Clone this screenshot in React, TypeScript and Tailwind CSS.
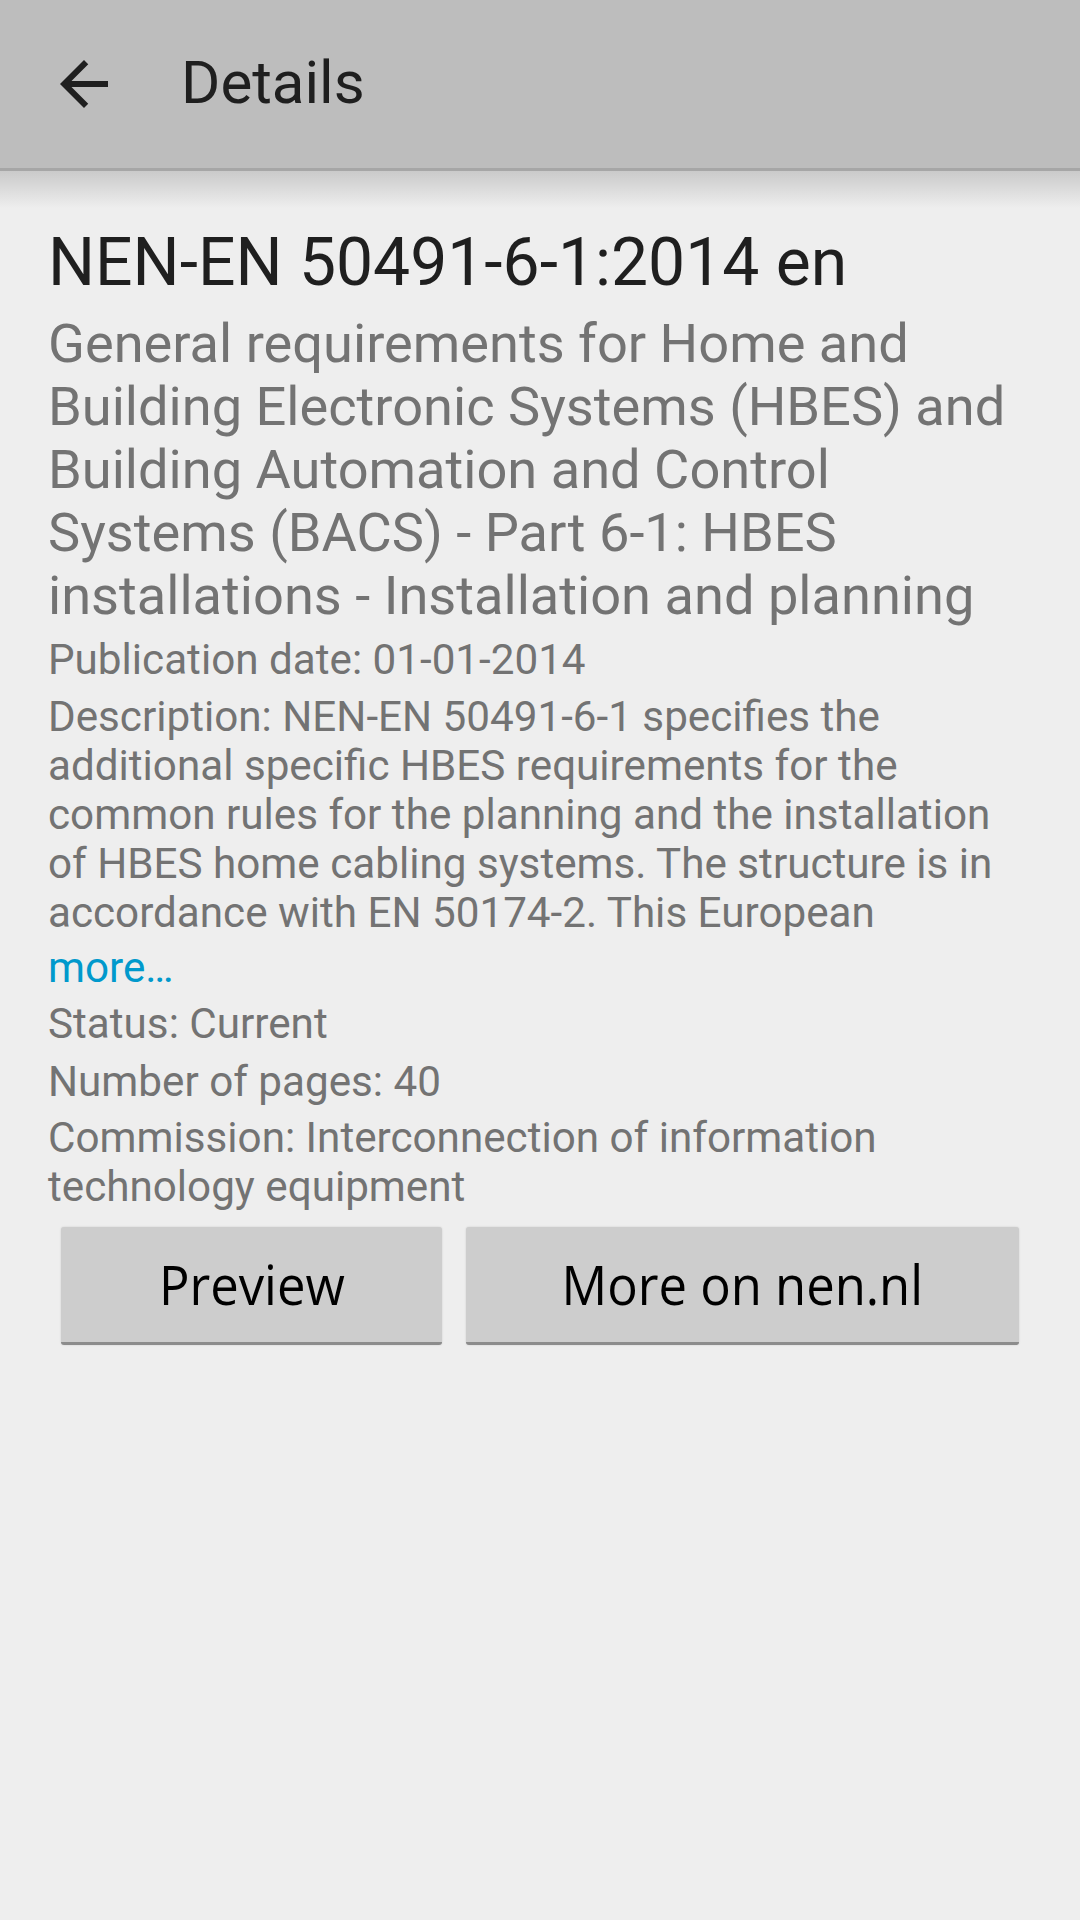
import React from 'react';

const ArrowBack: React.FC = () => (
  <svg width="72" height="72" viewBox="0 0 24 24" fill="#1f1f1f">
    <path d="M20 11H7.83l5.59-5.59L12 4l-8 8 8 8 1.41-1.41L7.83 13H20v-2z" />
  </svg>
);

const App: React.FC = () => {
  return (
    <div className="min-h-[1920px] w-[1080px] bg-[#eeeeee] font-['Roboto',sans-serif]">
      {/* toolbar */}
      <header className="h-[168px] bg-[#bdbdbd] flex items-center">
        <div className="ml-[48px]">
          <ArrowBack />
        </div>
        <span className="ml-[61px] text-[60px] leading-none text-[#1f1f1f] -mt-[2px]">Details</span>
      </header>
      <div className="h-[3px] bg-[#a6a6a6]" />
      <div className="h-[37px] bg-gradient-to-b from-[#cacaca] to-[#eeeeee]" />

      <main className="px-[48px] pt-[16px]">
        <h1 className="text-[66px] leading-[77px] text-[#1f1f1f]">NEN-EN 50491-6-1:2014 en</h1>
        <p className="mt-[11px] text-[54.2px] leading-[63px] text-[#737373]">
          General requirements for Home and Building Electronic Systems (HBES) and Building
          Automation and Control Systems (BACS) - Part 6-1: HBES installations - Installation and
          planning
        </p>
        <p className="mt-[8px] text-[42.2px] leading-[49px] text-[#737373]">Publication date: 01-01-2014</p>
        <p className="mt-[8px] text-[42.2px] leading-[49px] text-[#737373]">
          Description: NEN-EN 50491-6-1 specifies the additional specific HBES requirements for the
          common rules for the planning and the installation of HBES home cabling systems. The
          structure is in accordance with EN 50174-2. This European
        </p>
        <p className="mt-[6px] text-[42.2px] leading-[49px] text-[#0099cc]">more…</p>
        <p className="mt-[7px] text-[42.2px] leading-[49px] text-[#737373]">Status: Current</p>
        <p className="mt-[9px] text-[42.2px] leading-[49px] text-[#737373]">Number of pages: 40</p>
        <p className="mt-[7px] text-[42.2px] leading-[49px] text-[#737373]">
          Commission: Interconnection of information technology equipment
        </p>
      </main>

      <div className="flex gap-[24px] px-[61px] mt-[16px]">
        <button className="w-[381px] h-[118px] bg-[#cdcdcd] rounded-[3px] border-b-[3px] border-[#8c8c8c] shadow-[0_0_2px_rgba(0,0,0,0.15)] text-[54px] text-black font-['Open_Sans',sans-serif]">
          <span className="inline-block scale-x-[0.94]">Preview</span>
        </button>
        <button className="flex-1 h-[118px] bg-[#cdcdcd] rounded-[3px] border-b-[3px] border-[#8c8c8c] shadow-[0_0_2px_rgba(0,0,0,0.15)] text-[54px] text-black font-['Open_Sans',sans-serif]">
          <span className="inline-block scale-x-[0.94]">More on nen.nl</span>
        </button>
      </div>
    </div>
  );
};

export default App;
